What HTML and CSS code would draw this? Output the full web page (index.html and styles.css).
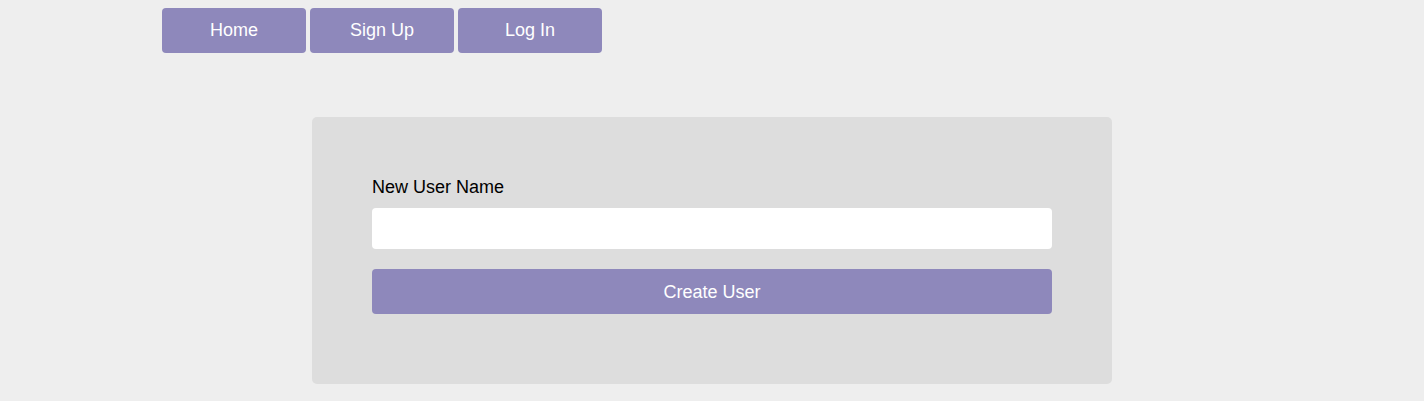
FILE: index.html
```html
<!DOCTYPE html>
<html>
<head>
<meta charset="utf-8">
<link rel="stylesheet" href="styles.css">
</head>
<body>
<div class="container">
  <nav class="nav">
    <a class="nav-btn" href="#">Home</a>
    <a class="nav-btn" href="#">Sign Up</a>
    <a class="nav-btn" href="#">Log In</a>
  </nav>
  <main class="card">
    <form class="form">
      <label class="label" for="name">New User Name</label>
      <input class="input" id="name" type="text">
      <button class="submit" type="button">Create User</button>
    </form>
  </main>
</div>
</body>
</html>
```
FILE: styles.css
```css
html, body {
  margin: 0;
  padding: 0;
  background: #eeeeee;
  font-family: "Liberation Sans", Arial, sans-serif;
}
.container {
  width: 1100px;
  margin: 0 auto;
  padding-top: 8px;
}
.nav {
  display: flex;
  gap: 4px;
}
.nav-btn {
  width: 144px;
  height: 45px;
  display: flex;
  align-items: center;
  justify-content: center;
  background: #8e88bb;
  color: #fff;
  text-decoration: none;
  font-size: 18px;
  border-radius: 4px;
}
.card {
  width: 800px;
  box-sizing: border-box;
  margin: 64px auto 0;
  background: #dddddd;
  border-radius: 5px;
  padding: 60px 60px 70px;
}
.form {
  display: flex;
  flex-direction: column;
}
.label {
  font-size: 18px;
  line-height: 21px;
  color: #000;
  margin-bottom: 10px;
}
.input {
  height: 41px;
  box-sizing: border-box;
  border: none;
  border-radius: 4px;
  background: #fff;
  margin: 0 0 20px;
  padding: 0 10px;
  font-size: 18px;
  font-family: inherit;
}
.submit {
  height: 45px;
  border: none;
  border-radius: 4px;
  background: #8e88bb;
  color: #fff;
  font-size: 18px;
  font-family: inherit;
  padding: 2px 0 0;
  cursor: pointer;
}
```
